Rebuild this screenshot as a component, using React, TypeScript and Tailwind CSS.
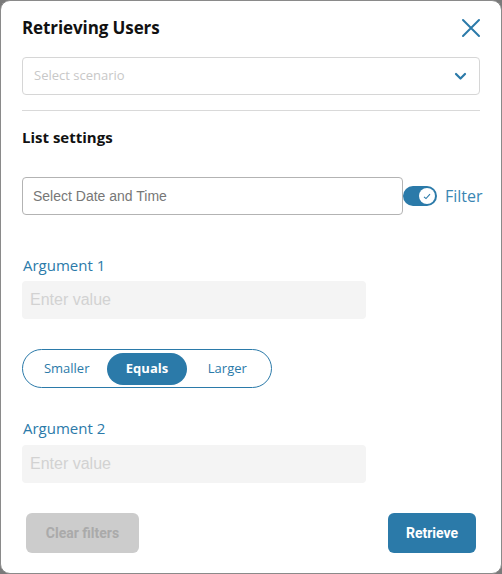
import React from "react";

export default function App() {
  const blue = "#2b7aa9";
  return (
    <div className="w-[502px] h-[574px] bg-[#7a7a7a]">
      <div className="w-[502px] h-[574px] bg-white rounded-[10px] border border-[#8a8a8a] box-border relative px-[21px] pt-[13px] font-['Open_Sans',sans-serif]">
        {/* header */}
        <div className="flex items-center justify-between h-[28px]">
          <div className="text-[17px] font-bold text-[#111] leading-[28px] tracking-[-0.1px]">Retrieving Users</div>
          <svg width="20" height="20" viewBox="0 0 20 20" className="mr-[-1px]">
            <path d="M2 2 L18 18 M18 2 L2 18" stroke={blue} strokeWidth="2" strokeLinecap="round" fill="none" />
          </svg>
        </div>
        {/* select */}
        <div className="mt-[15px] h-[38px] border border-[#d6d6d6] rounded-[4px] flex items-center justify-between pl-[11px] pr-[12px]">
          <span className="text-[13px] text-[#c8c8c8]">Select scenario</span>
          <svg width="13" height="9" viewBox="0 0 13 9">
            <path d="M2 2 L6.5 6.5 L11 2" stroke={blue} strokeWidth="2.2" fill="none" strokeLinecap="round" strokeLinejoin="round" />
          </svg>
        </div>
        <div className="mt-[15px] h-px bg-[#d9d9d9]" />
        <div className="mt-[16px] text-[15px] font-bold text-[#111] leading-[20px]">List settings</div>
        {/* date row */}
        <div className="mt-[30px] flex items-center">
          <div className="shrink-0 w-[381px] h-[38px] border border-[#b3b3b3] rounded-[4px] flex items-center pl-[10px] font-['Liberation_Sans',Arial,sans-serif] text-[14px] text-[#777]">
            Select Date and Time
          </div>
          <div className="shrink-0 w-[34px] h-[20px] rounded-full bg-[#2b7aa9] flex items-center justify-end pr-[2px]">
            <div className="w-[16px] h-[16px] rounded-full bg-white flex items-center justify-center">
              <svg width="8" height="7" viewBox="0 0 8 7">
                <path d="M1 3.8 L3 5.6 L7 1.2" stroke={blue} strokeWidth="1.1" fill="none" />
              </svg>
            </div>
          </div>
          <span className="ml-[8px] text-[16px] text-[#3a86b3] leading-[20px]">Filter</span>
        </div>
        {/* arg 1 */}
        <div className="mt-[40px] text-[15px] text-[#2b7aa9] leading-[20px] pl-px">Argument 1</div>
        <div className="mt-[6px] w-[344px] h-[38px] rounded-[4px] bg-[#f4f4f4] flex items-center pl-[8px] font-['Liberation_Sans',Arial,sans-serif] text-[16px] text-[#d2d2d2]">
          Enter value
        </div>
        {/* segmented */}
        <div className="mt-[30px] w-[250px] h-[39px] rounded-full border border-[#2b7aa9] flex items-center px-[3px] text-[13px]">
          <div className="w-[82px] text-center text-[#2b7aa9]">Smaller</div>
          <div className="w-[80px] h-[32px] rounded-full bg-[#2b7aa9] text-white font-bold flex items-center justify-center">Equals</div>
          <div className="w-[82px] text-center text-[#2b7aa9]">Larger</div>
        </div>
        {/* arg 2 */}
        <div className="mt-[30px] text-[15px] text-[#2b7aa9] leading-[20px] pl-px">Argument 2</div>
        <div className="mt-[7px] w-[344px] h-[38px] rounded-[4px] bg-[#f4f4f4] flex items-center pl-[8px] font-['Liberation_Sans',Arial,sans-serif] text-[16px] text-[#d2d2d2]">
          Enter value
        </div>
        {/* buttons */}
        <div className="mt-[30px] flex justify-between px-[4px] font-['Roboto',sans-serif] text-[14px] font-bold">
          <div className="w-[113px] h-[40px] rounded-[6px] bg-[#cccccc] text-[#aaaaaa] flex items-center justify-center">Clear filters</div>
          <div className="w-[88px] h-[40px] rounded-[6px] bg-[#2b7aa9] text-white flex items-center justify-center">Retrieve</div>
        </div>
      </div>
    </div>
  );
}
